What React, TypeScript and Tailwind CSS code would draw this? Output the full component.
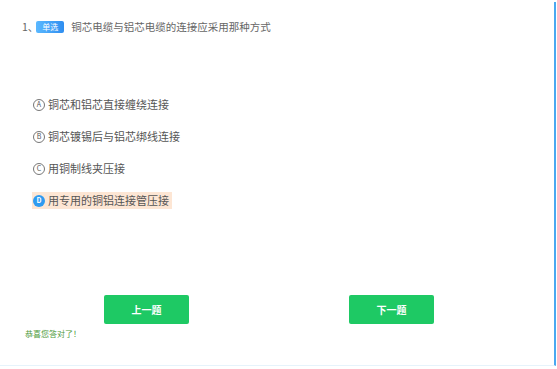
import React from "react";

const options = [
  { key: "A", text: "铜芯和铝芯直接缠绕连接" },
  { key: "B", text: "铜芯镀锡后与铝芯绑线连接" },
  { key: "C", text: "用铜制线夹压接" },
  { key: "D", text: "用专用的铜铝连接管压接", picked: true },
];

const font = { fontFamily: '"Noto Sans CJK SC", "Noto Sans", sans-serif' };

export default function App() {
  return (
    <div className="bg-white w-[557px] h-[369px] pt-[2px]" style={font}>
      <div className="w-[556px] h-[364px] border-r-2 border-b border-r-[#4aa8f0] border-b-[#e6f3fb] flex flex-col">
        {/* Question */}
        <div className="flex items-center pl-[22px] pt-[18px] text-[10.5px] text-[#666] leading-[14px]">
          <span className="whitespace-nowrap">1、</span>
          <span className="-ml-[2px] h-[12px] w-[28px] rounded-[2px] bg-gradient-to-r from-[#5ab8ff] to-[#2f8ef0] text-white text-[8px] leading-[12px] flex items-center justify-center">
            单选
          </span>
          <span className="ml-[7px]">铜芯电缆与铝芯电缆的连接应采用那种方式</span>
        </div>

        {/* Options */}
        <div className="flex flex-col gap-[15px] pl-[32px] mt-[62px]">
          {options.map((o) => (
            <div
              key={o.key}
              className={`flex items-center h-[17px] pr-[3px] self-start text-[11px] text-[#555] ${o.picked ? "bg-[#fde6d4]" : ""}`}
            >
              {o.picked ? (
                <span className="w-[12px] h-[12px] ml-[1px] rounded-full bg-[#2f9bf0] text-white text-[7px] font-bold flex items-center justify-center leading-none">
                  {o.key}
                </span>
              ) : (
                <span className="w-[12px] h-[12px] ml-[1px] rounded-full border border-[#777] text-[#555] text-[7px] flex items-center justify-center leading-none">
                  {o.key}
                </span>
              )}
              <span className="ml-[3px]">{o.text}</span>
            </div>
          ))}
        </div>

        {/* Buttons */}
        <div className="flex mt-[86px] pl-[104px] gap-[160px]">
          <button className="w-[85px] h-[29px] rounded-[2px] bg-[#1ec964] text-white text-[10px] font-bold">
            上一题
          </button>
          <button className="w-[85px] h-[29px] rounded-[2px] bg-[#1ec964] text-white text-[10px] font-bold">
            下一题
          </button>
        </div>

        <div className="pl-[25px] mt-[4px] text-[8px] text-[#4e9a3c] leading-[12px]">恭喜您答对了！</div>
      </div>
    </div>
  );
}
